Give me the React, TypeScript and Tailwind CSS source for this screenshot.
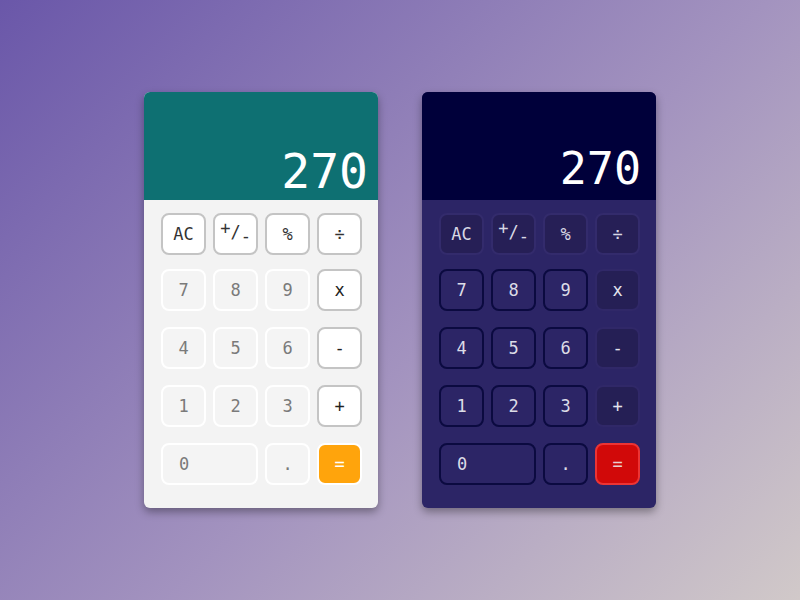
const rows = [
  [
    { label: "AC", kind: "top" },
    { label: "+/-", kind: "top" },
    { label: "%", kind: "top" },
    { label: "÷", kind: "top" },
  ],
  [
    { label: "7", kind: "num" },
    { label: "8", kind: "num" },
    { label: "9", kind: "num" },
    { label: "x", kind: "op" },
  ],
  [
    { label: "4", kind: "num" },
    { label: "5", kind: "num" },
    { label: "6", kind: "num" },
    { label: "-", kind: "op" },
  ],
  [
    { label: "1", kind: "num" },
    { label: "2", kind: "num" },
    { label: "3", kind: "num" },
    { label: "+", kind: "op" },
  ],
  [
    { label: "0", kind: "zero" },
    { label: ".", kind: "num" },
    { label: "=", kind: "eq" },
  ],
];

type Kind = "top" | "num" | "op" | "eq";

const themes = {
  light: {
    card: "bg-[#f3f3f3]",
    display: "bg-[#0e7072] pr-[10px]",
    readout: "text-[48px] leading-[58px]",
    top: "bg-white border-[#c4c4c4] text-[#333]",
    num: "bg-[#f4f4f4] border-white text-[#7a7a7a]",
    op: "bg-white border-[#c4c4c4] text-[#222]",
    eq: "bg-[#ffa40c] border-white text-white",
  },
  dark: {
    card: "bg-[#2c2566]",
    display: "bg-[#00003a] pr-[15px]",
    readout: "text-[45px] leading-[58px] pb-[2px]",
    top: "bg-[#261f56] border-[#332b6c] text-[#d8d8e4]",
    num: "bg-[#2c2566] border-[#0b0a40] text-[#dcdce6]",
    op: "bg-[#251f55] border-[#302868] text-[#e4e4ee]",
    eq: "bg-[#d10909] border-[#ec3434] text-[#e8d0d0]",
  },
};

function Calculator({ theme }: { theme: "light" | "dark" }) {
  const t = themes[theme];

  return (
    <div
      className={`w-[234px] overflow-hidden rounded-md shadow-[0_4px_8px_rgba(0,0,0,0.35)] ${t.card}`}
    >
      <div className={`flex h-[108px] items-end justify-end ${t.display}`}>
        <span
          className={`font-['DejaVu_Sans_Mono',monospace] text-white ${t.readout}`}
        >
          270
        </span>
      </div>
      <div className="flex flex-col pt-[13px] pr-4 pb-[23px] pl-[17px] font-['DejaVu_Sans_Mono',monospace]">
        {rows.map((row, i) => (
          <div
            key={i}
            className={`grid grid-cols-4 gap-x-[7px] ${
              i === 0 ? "" : i === 1 ? "mt-[14px]" : "mt-4"
            }`}
          >
            {row.map((key) => {
              const style = key.kind === "zero" ? t.num : t[key.kind as Kind];
              return (
                <button
                  key={key.label}
                  type="button"
                  className={`flex h-[42px] items-center rounded-lg border-2 pt-[2px] text-[17px] ${style} ${
                    key.kind === "zero"
                      ? "col-span-2 justify-start pl-4"
                      : "justify-center"
                  }`}
                >
                  {key.label === "+/-" ? (
                    <span className="flex items-start">
                      <span className="-mt-1">+</span>
                      <span>/</span>
                      <span className="mt-1">-</span>
                    </span>
                  ) : (
                    key.label
                  )}
                </button>
              );
            })}
          </div>
        ))}
      </div>
    </div>
  );
}

export default function App() {
  return (
    <div className="flex h-[600px] w-[800px] items-start justify-center gap-11 bg-[linear-gradient(135deg,#6a57a9_0%,#a393bf_55%,#d1c9c9_100%)] pt-[92px]">
      <Calculator theme="light" />
      <Calculator theme="dark" />
    </div>
  );
}
